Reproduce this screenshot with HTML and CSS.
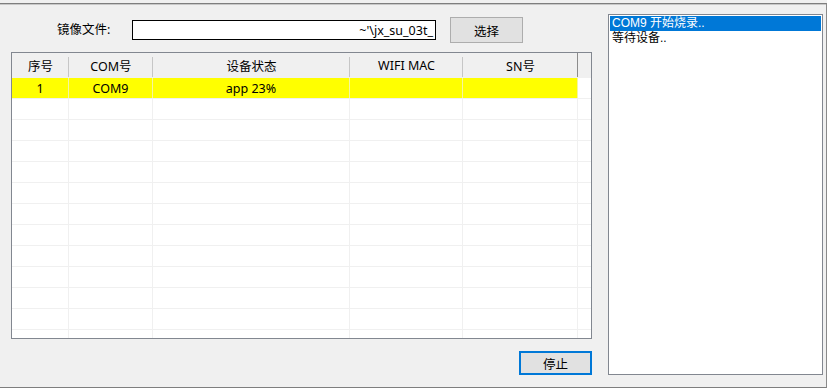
FILE: index.html
```html
<!DOCTYPE html>
<html lang="zh-CN">
<head>
    <meta charset="UTF-8">
    <title>烧录工具</title>
    <link rel="stylesheet" href="styles.css">
</head>
<body>
    <div class="window">
        <div class="left-pane">
            <div class="file-row">
                <label class="file-label" for="imagePath">镜像文件:</label>
                <div class="file-input" id="imagePath"><span>~'\jx_su_03t_</span></div>
                <button class="btn">选择</button>
            </div>

            <div class="grid">
                <div class="grid-head">
                    <div class="hcell">序号</div>
                    <div class="hcell">COM号</div>
                    <div class="hcell">设备状态</div>
                    <div class="hcell">WIFI MAC</div>
                    <div class="hcell last">SN号</div>
                    <div class="hfill"></div>
                </div>
                <div class="grid-body">
                    <div class="row active">
                        <div class="cell">1</div>
                        <div class="cell">COM9</div>
                        <div class="cell">app 23%</div>
                        <div class="cell"></div>
                        <div class="cell"></div>
                        <div class="fill"></div>
                    </div>
                    <div class="row"><div class="cell"></div><div class="cell"></div><div class="cell"></div><div class="cell"></div><div class="cell"></div><div class="fill"></div></div>
                    <div class="row"><div class="cell"></div><div class="cell"></div><div class="cell"></div><div class="cell"></div><div class="cell"></div><div class="fill"></div></div>
                    <div class="row"><div class="cell"></div><div class="cell"></div><div class="cell"></div><div class="cell"></div><div class="cell"></div><div class="fill"></div></div>
                    <div class="row"><div class="cell"></div><div class="cell"></div><div class="cell"></div><div class="cell"></div><div class="cell"></div><div class="fill"></div></div>
                    <div class="row"><div class="cell"></div><div class="cell"></div><div class="cell"></div><div class="cell"></div><div class="cell"></div><div class="fill"></div></div>
                    <div class="row"><div class="cell"></div><div class="cell"></div><div class="cell"></div><div class="cell"></div><div class="cell"></div><div class="fill"></div></div>
                    <div class="row"><div class="cell"></div><div class="cell"></div><div class="cell"></div><div class="cell"></div><div class="cell"></div><div class="fill"></div></div>
                    <div class="row"><div class="cell"></div><div class="cell"></div><div class="cell"></div><div class="cell"></div><div class="cell"></div><div class="fill"></div></div>
                    <div class="row"><div class="cell"></div><div class="cell"></div><div class="cell"></div><div class="cell"></div><div class="cell"></div><div class="fill"></div></div>
                    <div class="row"><div class="cell"></div><div class="cell"></div><div class="cell"></div><div class="cell"></div><div class="cell"></div><div class="fill"></div></div>
                    <div class="row"><div class="cell"></div><div class="cell"></div><div class="cell"></div><div class="cell"></div><div class="cell"></div><div class="fill"></div></div>
                    <div class="row"><div class="cell"></div><div class="cell"></div><div class="cell"></div><div class="cell"></div><div class="cell"></div><div class="fill"></div></div>
                </div>
            </div>

            <div class="bottom-row">
                <button class="btn focused">停止</button>
            </div>
        </div>

        <div class="log-box">
            <div class="log-item selected">COM9 开始烧录..</div>
            <div class="log-item">等待设备..</div>
        </div>
    </div>
</body>
</html>
```

FILE: styles.css
```css
html, body {
    margin: 0;
    padding: 0;
}
body {
    width: 827px;
    height: 388px;
    background: #f0f0f0;
    font-family: "Noto Sans", "Noto Sans CJK SC", sans-serif;
    font-size: 12.5px;
    color: #000;
    overflow: hidden;
}
.window {
    margin-top: 3px;
    height: 383px;
    border-top: 1px solid #7e7e7e;
    border-right: 1px solid #8a8a8a;
    border-bottom: 1px solid #7e7e7e;
    box-shadow: inset 0 1px 0 #c8c8c8;
    display: flex;
    box-sizing: content-box;
}
.left-pane {
    width: 581px;
    padding: 13px 0 0 11px;
    display: flex;
    flex-direction: column;
}

/* file picker row */
.file-row {
    height: 26px;
    display: flex;
    align-items: center;
    padding-left: 46px;
}
.file-label {
    width: 75px;
    line-height: 20px;
}
.file-input {
    width: 304px;
    height: 20px;
    box-sizing: border-box;
    border: 1px solid #000;
    background: #fff;
    display: flex;
    justify-content: flex-end;
    align-items: center;
    padding-right: 2px;
    overflow: hidden;
    white-space: nowrap;
}
.btn {
    width: 73px;
    height: 26px;
    margin-left: 14px;
    box-sizing: border-box;
    border: 1px solid #adadad;
    background: #e1e1e1;
    font-family: "Noto Sans CJK SC", sans-serif;
    font-size: 12.5px;
    color: #000;
    padding: 0;
}
.btn.focused {
    height: 24px;
    margin-left: 0;
    border: 2px solid #0078d7;
}

/* list view */
.grid {
    margin-top: 9px;
    height: 287px;
    box-sizing: border-box;
    border: 1px solid #828790;
    background: #fff;
    overflow: hidden;
}
.grid-head,
.row {
    display: grid;
    grid-template-columns: 57px 84px 197px 113px 115px 1fr;
}
.grid-head {
    height: 25px;
    background: #f0f0f0;
}
.hcell {
    display: flex;
    align-items: center;
    justify-content: center;
    background: linear-gradient(#c6c6c6, #c6c6c6) right 4px / 1px 20px no-repeat;
}
.hcell.last {
    background: linear-gradient(#8c8c8c, #8c8c8c) right 0 / 1px 24px no-repeat;
}
.row {
    height: 21px;
    box-sizing: border-box;
    border-bottom: 1px solid #f0f0f0;
}
.cell {
    display: flex;
    align-items: center;
    justify-content: center;
    border-right: 1px solid #f0f0f0;
}
.row.active .cell {
    background: #ffff00;
    border-right-color: #f5f5a0;
}

.bottom-row {
    display: flex;
    justify-content: flex-end;
    margin-top: 12px;
}

/* log list box */
.log-box {
    margin: 10px 0 0 16px;
    width: 215px;
    height: 361px;
    box-sizing: border-box;
    border: 1px solid #828790;
    background: #fff;
    padding: 1px;
    font-family: "Liberation Sans", "Noto Sans CJK SC", sans-serif;
    font-size: 12px;
}
.log-item {
    height: 15px;
    line-height: 15px;
    padding-left: 2px;
    white-space: nowrap;
    overflow: hidden;
}
.log-item.selected {
    background: #0078d7;
    color: #fff;
}
```
